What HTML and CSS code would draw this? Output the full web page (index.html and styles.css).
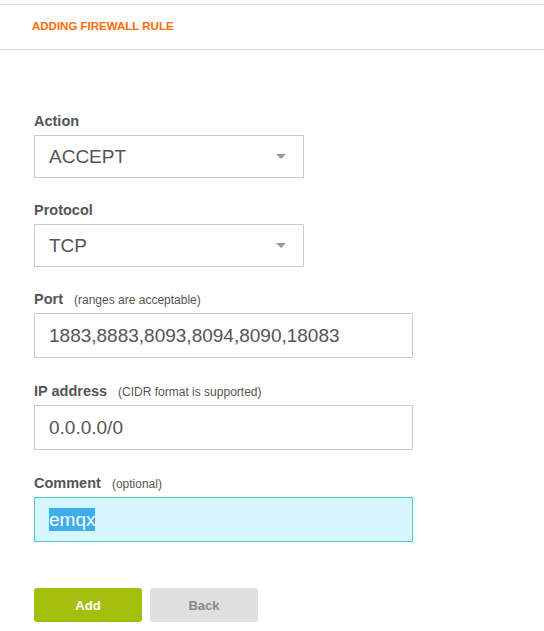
FILE: index.html
```html
<!DOCTYPE html>
<html>
<head>
<meta charset="utf-8">
<link rel="stylesheet" href="styles.css">
</head>
<body>
<div class="page">
  <div class="header"><span class="title">ADDING FIREWALL RULE</span></div>
  <form class="form">
    <div class="field">
      <div class="label">Action</div>
      <div class="select"><span>ACCEPT</span><span class="arrow"></span></div>
    </div>
    <div class="field">
      <div class="label">Protocol</div>
      <div class="select"><span>TCP</span><span class="arrow"></span></div>
    </div>
    <div class="field field-input">
      <div class="label">Port <span class="note">(ranges are acceptable)</span></div>
      <div class="input">1883,8883,8093,8094,8090,18083</div>
    </div>
    <div class="field field-input">
      <div class="label">IP address <span class="note">(CIDR format is supported)</span></div>
      <div class="input">0.0.0.0/0</div>
    </div>
    <div class="field field-input">
      <div class="label">Comment <span class="note">(optional)</span></div>
      <div class="input focused"><span class="sel">emqx</span></div>
    </div>
    <div class="buttons">
      <div class="btn add">Add</div>
      <div class="btn back">Back</div>
    </div>
  </form>
</div>
</body>
</html>
```
FILE: styles.css
```css
html, body {
  margin: 0;
  padding: 0;
  background: #fff;
}
body {
  font-family: "Liberation Sans", Arial, sans-serif;
  color: #555;
}
.page {
  padding-top: 4px;
}
.header {
  border-top: 1px solid #dcdcdc;
  border-bottom: 1px solid #dcdcdc;
  height: 44px;
  display: flex;
  align-items: center;
  padding-left: 32px;
}
.title {
  font-size: 11.5px;
  font-weight: bold;
  color: #ff6a00;
  line-height: 14px;
  margin-top: -2px;
}
.form {
  padding: 61px 0 0 34px;
  margin: 0;
}
.field {
  margin-bottom: 22px;
}
.field-input {
  margin-bottom: 23px;
}
.label {
  font-size: 14.5px;
  font-weight: bold;
  line-height: 20px;
  height: 20px;
  margin-bottom: 4px;
  color: #555;
}
.note {
  font-size: 12px;
  font-weight: normal;
  line-height: 14px;
  margin-left: 7px;
}
.select {
  box-sizing: border-box;
  width: 270px;
  height: 43px;
  border: 1px solid #ccc;
  display: flex;
  align-items: center;
  justify-content: space-between;
  padding: 0 17px 0 14px;
  font-size: 19px;
  color: #555;
}
.arrow {
  width: 0;
  height: 0;
  border-left: 5px solid transparent;
  border-right: 5px solid transparent;
  border-top: 5px solid #999;
}
.input {
  box-sizing: border-box;
  width: 379px;
  height: 45px;
  border: 1px solid #ccc;
  display: flex;
  align-items: center;
  padding: 0 14px;
  font-size: 19px;
  color: #555;
}
.input.focused {
  background: #d6f6fd;
  border-color: #4fcabf;
}
.sel {
  background: #3daee9;
  color: #fff;
  line-height: 23px;
}
.buttons {
  display: flex;
  gap: 8px;
  margin-top: 46px;
}
.btn {
  width: 108px;
  height: 34px;
  border-radius: 3px;
  display: flex;
  align-items: center;
  justify-content: center;
  font-size: 13px;
  font-weight: bold;
}
.add {
  background: #a3bf0b;
  color: #fff;
}
.back {
  background: #e0dfdf;
  color: #888;
}
```
